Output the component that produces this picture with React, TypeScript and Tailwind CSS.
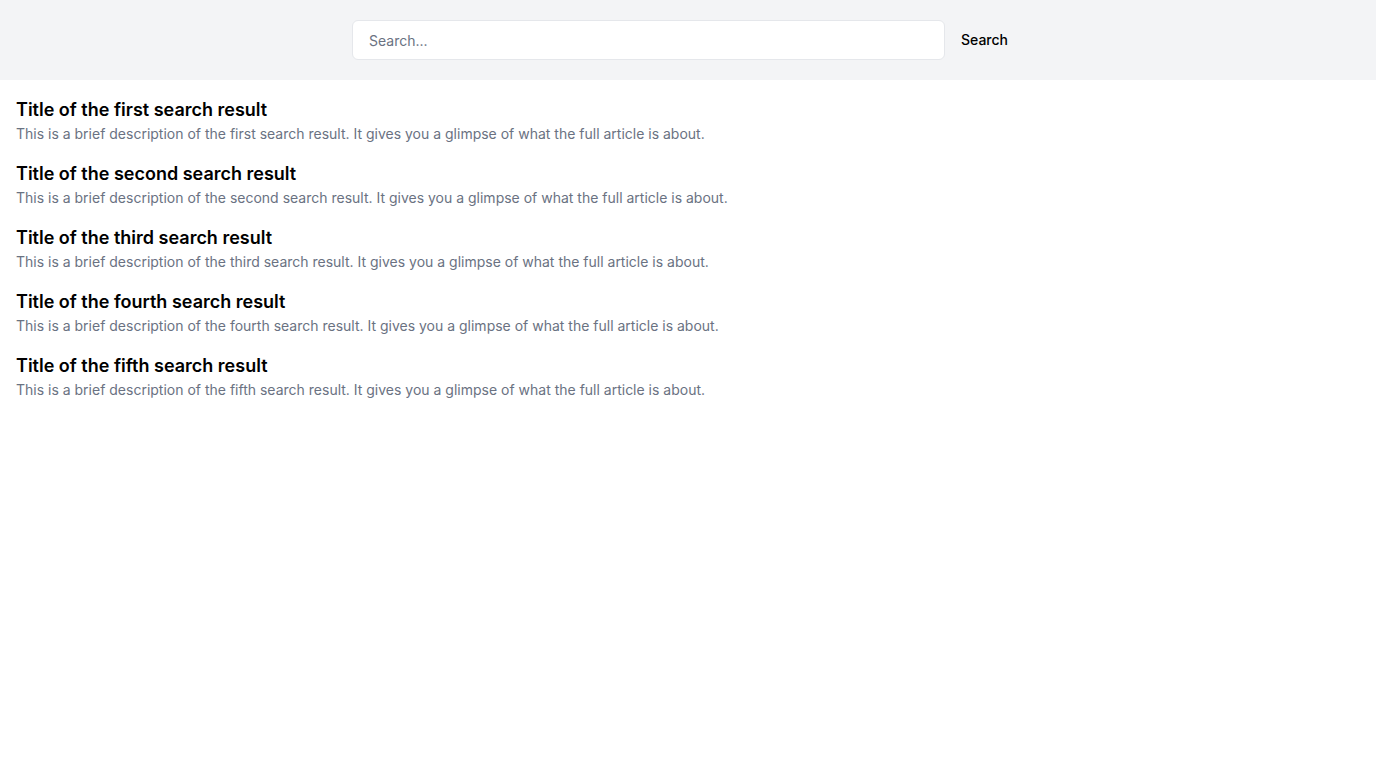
const results = [
  { title: "Title of the first search result", n: "first" },
  { title: "Title of the second search result", n: "second" },
  { title: "Title of the third search result", n: "third" },
  { title: "Title of the fourth search result", n: "fourth" },
  { title: "Title of the fifth search result", n: "fifth" },
];

export default function App() {
  return (
    <div className="min-h-screen bg-white font-['Inter',sans-serif]">
      <header className="bg-gray-100 p-5">
        <div className="max-w-2xl mx-auto flex">
          <input
            className="flex-1 h-10 px-4 rounded-md border border-gray-200 bg-white text-sm placeholder-gray-500 outline-none"
            placeholder="Search..."
          />
          <button className="px-4 text-sm font-medium text-black">Search</button>
        </div>
      </header>
      <main className="p-4 space-y-4">
        {results.map((r) => (
          <div key={r.n}>
            <h2 className="text-lg font-semibold text-black">{r.title}</h2>
            <p className="text-sm text-gray-500">
              This is a brief description of the {r.n} search result. It gives you a glimpse of what the full article is about.
            </p>
          </div>
        ))}
      </main>
    </div>
  );
}
